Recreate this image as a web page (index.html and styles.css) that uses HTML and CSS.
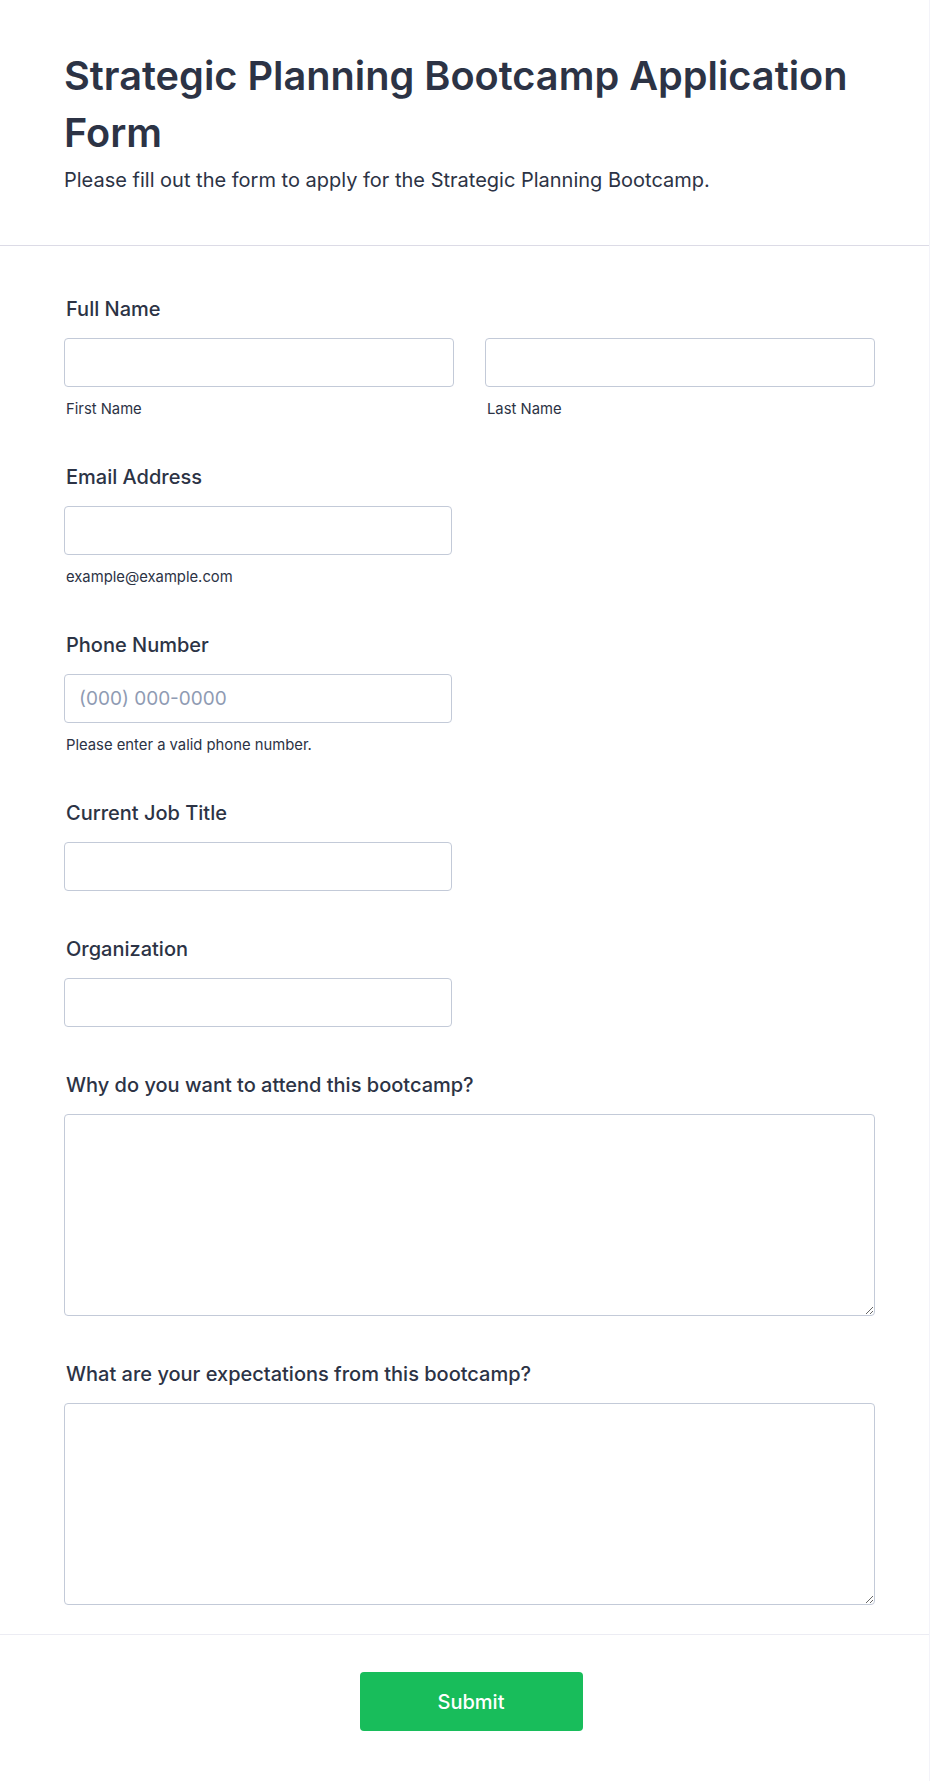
FILE: index.html
```html
<!DOCTYPE html>
<html lang="en">
<head>
<meta charset="utf-8">
<title>Strategic Planning Bootcamp Application Form</title>
<link rel="stylesheet" href="styles.css">
</head>
<body>
<div class="page">
  <header class="form-header">
    <h1 class="form-title">Strategic Planning Bootcamp Application Form</h1>
    <p class="form-subtitle">Please fill out the form to apply for the Strategic Planning Bootcamp.</p>
  </header>
  <form class="form-body">
    <div class="field">
      <label class="field-label">Full Name</label>
      <div class="name-row">
        <div class="name-col">
          <input class="text-input" type="text">
          <span class="sublabel">First Name</span>
        </div>
        <div class="name-col">
          <input class="text-input" type="text">
          <span class="sublabel">Last Name</span>
        </div>
      </div>
    </div>
    <div class="field">
      <label class="field-label">Email Address</label>
      <input class="text-input half" type="email">
      <span class="sublabel">example@example.com</span>
    </div>
    <div class="field">
      <label class="field-label">Phone Number</label>
      <input class="text-input half" type="tel" placeholder="(000) 000-0000">
      <span class="sublabel">Please enter a valid phone number.</span>
    </div>
    <div class="field">
      <label class="field-label">Current Job Title</label>
      <input class="text-input half" type="text">
    </div>
    <div class="field">
      <label class="field-label">Organization</label>
      <input class="text-input half" type="text">
    </div>
    <div class="field">
      <label class="field-label">Why do you want to attend this bootcamp?</label>
      <textarea class="text-area"></textarea>
    </div>
    <div class="field">
      <label class="field-label">What are your expectations from this bootcamp?</label>
      <textarea class="text-area"></textarea>
    </div>
  </form>
  <footer class="form-footer">
    <button class="submit-btn" type="button">Submit</button>
  </footer>
</div>
</body>
</html>
```
FILE: styles.css
```css
html, body {
  margin: 0;
  padding: 0;
  background: #ffffff;
}

body {
  font-family: Inter, "Noto Sans", "Liberation Sans", sans-serif;
  color: #2c3345;
}

.page {
  display: flex;
  flex-direction: column;
  min-height: 1781px;
  box-sizing: border-box;
  border-right: 1px solid #f3f3f9;
}

.form-header {
  padding: 48px 54px 50px 64px;
  border-bottom: 1px solid #dcdbe6;
}

.form-title {
  margin: 0;
  font-size: 39.7px;
  line-height: 57px;
  font-weight: 600;
  color: #2c3345;
}

.form-subtitle {
  margin: 3px 0 0;
  font-size: 20px;
  line-height: 30px;
  font-weight: 400;
  color: #2c3345;
}

.form-body {
  display: flex;
  flex-direction: column;
  gap: 43px;
  padding: 48px 54px 29px 64px;
  border-bottom: 1px solid #ececf3;
}

.field {
  display: flex;
  flex-direction: column;
  align-items: flex-start;
}

.field-label {
  display: block;
  font-size: 20px;
  line-height: 30px;
  font-weight: 500;
  margin: 0 0 14px 2px;
  color: #2c3345;
}

.name-row {
  display: grid;
  grid-template-columns: 1fr 1fr;
  column-gap: 31px;
  width: 100%;
}

.name-col {
  display: flex;
  flex-direction: column;
}

.text-input {
  display: block;
  box-sizing: border-box;
  width: 100%;
  height: 49px;
  margin: 0;
  padding: 0 14px;
  border: 1px solid #c3cad8;
  border-radius: 4px;
  background: #ffffff;
  font-family: Inter, "Noto Sans", "Liberation Sans", sans-serif;
  font-size: 19px;
  color: #2c3345;
  outline: none;
}

.text-input.half {
  width: 388px;
}

.text-input::placeholder {
  color: #8f9bb3;
}

.sublabel {
  display: block;
  margin: 13px 0 0 2px;
  font-size: 14.8px;
  line-height: 19px;
  color: #2c3345;
}

.text-area {
  display: block;
  box-sizing: border-box;
  width: 100%;
  height: 202px;
  margin: 0;
  padding: 10px 14px;
  border: 1px solid #c3cad8;
  border-radius: 4px;
  background: #ffffff;
  font-family: Inter, "Noto Sans", "Liberation Sans", sans-serif;
  font-size: 16px;
  color: #2c3345;
  outline: none;
}

.form-footer {
  display: flex;
  justify-content: center;
  padding: 37px 53px 50px 66px;
  flex: 1;
}

.submit-btn {
  width: 223px;
  height: 59px;
  border: none;
  border-radius: 4px;
  background: #18bd5b;
  color: #ffffff;
  font-family: Inter, "Noto Sans", "Liberation Sans", sans-serif;
  font-size: 20px;
  font-weight: 500;
  cursor: pointer;
}
```
